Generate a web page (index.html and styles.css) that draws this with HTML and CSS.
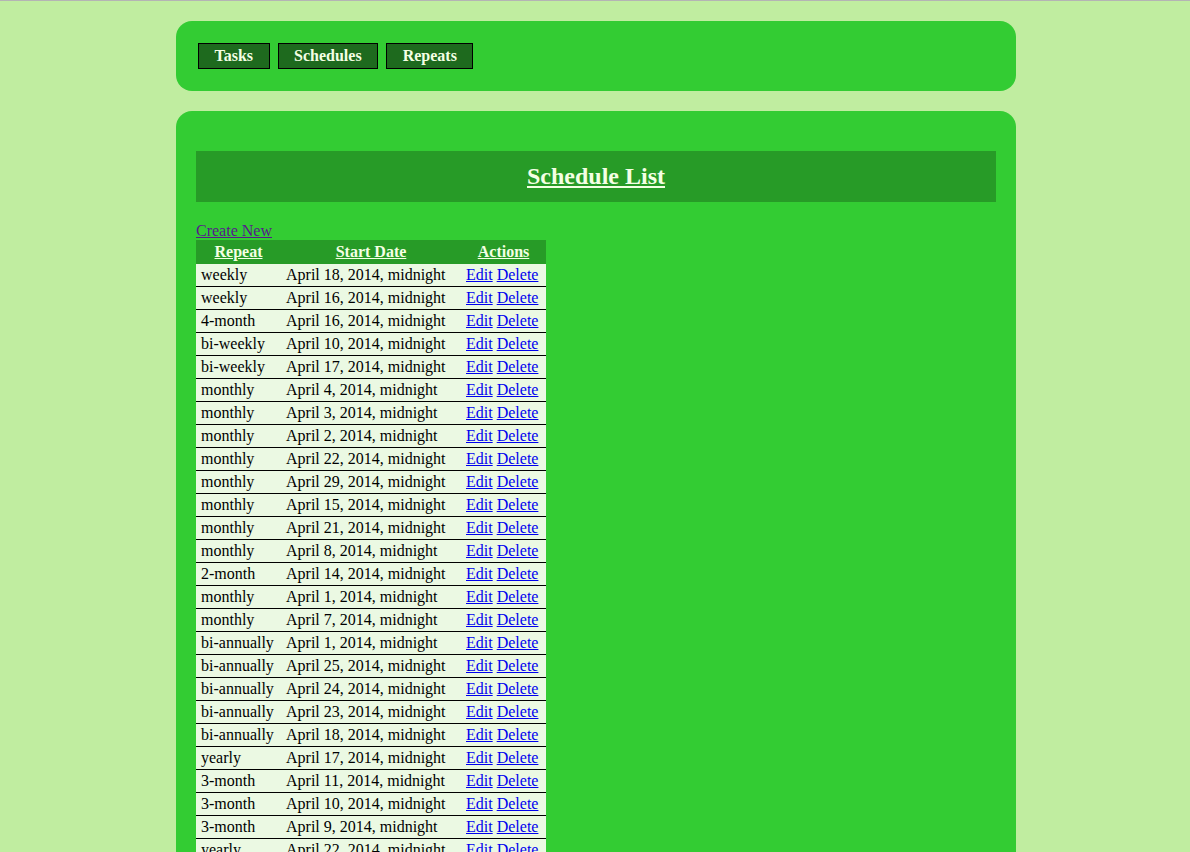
FILE: index.html
```html
<!DOCTYPE html>
<html>
<head>
<meta charset="utf-8">
<title>Schedule List</title>
<link rel="stylesheet" href="styles.css">
</head>
<body>
<div class="wrap">
  <div class="panel nav">
    <a class="navbtn" href="#">Tasks</a>
    <a class="navbtn" href="#">Schedules</a>
    <a class="navbtn" href="#">Repeats</a>
  </div>
  <div class="panel main">
    <div class="titlebar"><a class="title" href="#">Schedule List</a></div>
    <a class="create" href="#">Create New</a>
    <table class="list">
      <colgroup><col class="c1"><col class="c2"><col class="c3"></colgroup>
      <thead>
        <tr><th><a href="#">Repeat</a></th><th><a href="#">Start Date</a></th><th><a href="#">Actions</a></th></tr>
      </thead>
      <tbody>
        <tr><td>weekly</td><td>April 18, 2014, midnight</td><td><a href="#">Edit</a> <a href="#">Delete</a></td></tr>
        <tr><td>weekly</td><td>April 16, 2014, midnight</td><td><a href="#">Edit</a> <a href="#">Delete</a></td></tr>
        <tr><td>4-month</td><td>April 16, 2014, midnight</td><td><a href="#">Edit</a> <a href="#">Delete</a></td></tr>
        <tr><td>bi-weekly</td><td>April 10, 2014, midnight</td><td><a href="#">Edit</a> <a href="#">Delete</a></td></tr>
        <tr><td>bi-weekly</td><td>April 17, 2014, midnight</td><td><a href="#">Edit</a> <a href="#">Delete</a></td></tr>
        <tr><td>monthly</td><td>April 4, 2014, midnight</td><td><a href="#">Edit</a> <a href="#">Delete</a></td></tr>
        <tr><td>monthly</td><td>April 3, 2014, midnight</td><td><a href="#">Edit</a> <a href="#">Delete</a></td></tr>
        <tr><td>monthly</td><td>April 2, 2014, midnight</td><td><a href="#">Edit</a> <a href="#">Delete</a></td></tr>
        <tr><td>monthly</td><td>April 22, 2014, midnight</td><td><a href="#">Edit</a> <a href="#">Delete</a></td></tr>
        <tr><td>monthly</td><td>April 29, 2014, midnight</td><td><a href="#">Edit</a> <a href="#">Delete</a></td></tr>
        <tr><td>monthly</td><td>April 15, 2014, midnight</td><td><a href="#">Edit</a> <a href="#">Delete</a></td></tr>
        <tr><td>monthly</td><td>April 21, 2014, midnight</td><td><a href="#">Edit</a> <a href="#">Delete</a></td></tr>
        <tr><td>monthly</td><td>April 8, 2014, midnight</td><td><a href="#">Edit</a> <a href="#">Delete</a></td></tr>
        <tr><td>2-month</td><td>April 14, 2014, midnight</td><td><a href="#">Edit</a> <a href="#">Delete</a></td></tr>
        <tr><td>monthly</td><td>April 1, 2014, midnight</td><td><a href="#">Edit</a> <a href="#">Delete</a></td></tr>
        <tr><td>monthly</td><td>April 7, 2014, midnight</td><td><a href="#">Edit</a> <a href="#">Delete</a></td></tr>
        <tr><td>bi-annually</td><td>April 1, 2014, midnight</td><td><a href="#">Edit</a> <a href="#">Delete</a></td></tr>
        <tr><td>bi-annually</td><td>April 25, 2014, midnight</td><td><a href="#">Edit</a> <a href="#">Delete</a></td></tr>
        <tr><td>bi-annually</td><td>April 24, 2014, midnight</td><td><a href="#">Edit</a> <a href="#">Delete</a></td></tr>
        <tr><td>bi-annually</td><td>April 23, 2014, midnight</td><td><a href="#">Edit</a> <a href="#">Delete</a></td></tr>
        <tr><td>bi-annually</td><td>April 18, 2014, midnight</td><td><a href="#">Edit</a> <a href="#">Delete</a></td></tr>
        <tr><td>yearly</td><td>April 17, 2014, midnight</td><td><a href="#">Edit</a> <a href="#">Delete</a></td></tr>
        <tr><td>3-month</td><td>April 11, 2014, midnight</td><td><a href="#">Edit</a> <a href="#">Delete</a></td></tr>
        <tr><td>3-month</td><td>April 10, 2014, midnight</td><td><a href="#">Edit</a> <a href="#">Delete</a></td></tr>
        <tr><td>3-month</td><td>April 9, 2014, midnight</td><td><a href="#">Edit</a> <a href="#">Delete</a></td></tr>
        <tr><td>yearly</td><td>April 22, 2014, midnight</td><td><a href="#">Edit</a> <a href="#">Delete</a></td></tr>
      </tbody>
    </table>
  </div>
</div>
</body>
</html>
```

FILE: styles.css
```css
html, body {
  margin: 0;
  padding: 0;
}
body {
  background: #c0eda0;
  border-top: 1px solid #b4b4b4;
  padding-left: 2px;
  font-family: "Liberation Serif", "Times New Roman", serif;
  font-size: 16px;
  color: #000;
}
.wrap {
  width: 840px;
  margin: 20px auto 0;
}
.panel {
  background: #33cc33;
  border-radius: 16px;
}
.nav {
  display: flex;
  gap: 8px;
  padding: 22px;
}
.navbtn {
  display: block;
  height: 24px;
  line-height: 24px;
  padding: 0 15.5px;
  background: #1e6a1e;
  border: 1px solid #000;
  color: #f4ffe4;
  font-weight: bold;
  text-decoration: none;
}
.main {
  margin-top: 20px;
  padding: 40px 20px 40px;
}
.titlebar {
  background: #279b27;
  height: 51px;
  display: flex;
  align-items: center;
  justify-content: center;
}
.title {
  font-size: 24px;
  font-weight: bold;
  color: #f4ffe4;
  text-decoration: underline;
}
.create {
  display: inline-block;
  margin-top: 20px;
  color: #551a8b;
  line-height: 18px;
}
.list {
  border-collapse: collapse;
  width: 350px;
  table-layout: fixed;
}
.c1 { width: 85px; }
.c2 { width: 180px; }
.c3 { width: 85px; }
.list thead tr {
  background: #279b27;
}
.list th {
  height: 24px;
  padding: 0;
  text-align: center;
  font-weight: bold;
}
.list th a {
  color: #f4ffe4;
}
.list tbody tr {
  background: #ebf9e3;
  border-bottom: 1px solid #000;
}
.list td {
  height: 22px;
  padding: 0 0 0 5px;
  white-space: nowrap;
  text-align: left;
}
.list td a {
  color: #0000ee;
}
```
